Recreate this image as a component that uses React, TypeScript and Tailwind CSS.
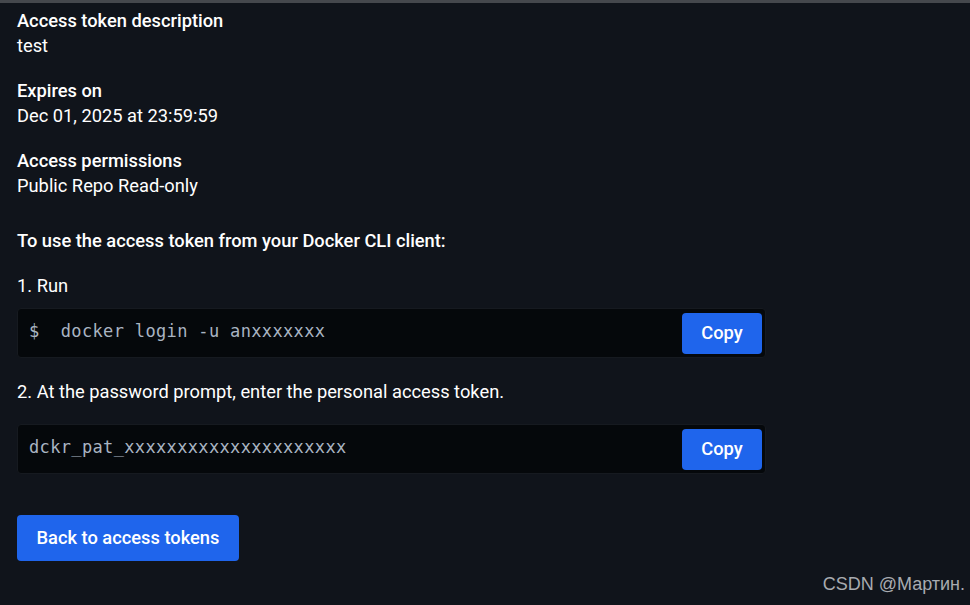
import React from "react";

function Field({ label, value, first }: { label: string; value: string; first?: boolean }) {
  return (
    <div className={first ? "" : "mt-[20px]"}>
      <div className="text-[18.3px] leading-[25px] font-medium text-white">{label}</div>
      <div className="text-[18.3px] leading-[25px] text-white">{value}</div>
    </div>
  );
}

function CodeBox({ text, className }: { text: string; className?: string }) {
  return (
    <div
      className={
        "w-[749px] h-[50px] rounded-[4px] bg-[#05080b] border border-[#161a20] flex items-center justify-between pl-[11px] pr-[3px] " +
        (className ?? "")
      }
    >
      <span
        className="text-[17px] tracking-[0.35px] text-[#a9b4c2] whitespace-pre -mt-[3px]"
        style={{ fontFamily: '"DejaVu Sans Mono", "Liberation Mono", monospace' }}
      >
        {text}
      </span>
      <button className="w-[80px] h-[41px] rounded-[4px] bg-[#1f65ec] text-white text-[18.3px] font-medium pb-[1px]">
        Copy
      </button>
    </div>
  );
}

export default function App() {
  return (
    <div
      className="w-[970px] h-[605px] bg-[#10141b] relative overflow-hidden"
      style={{ fontFamily: 'Roboto, "Noto Sans", sans-serif' }}
    >
      <div className="h-[3px] bg-[#45484d]" />
      <div className="px-[17px] pt-[5px]">
        <Field first label="Access token description" value="test" />
        <Field label="Expires on" value="Dec 01, 2025 at 23:59:59" />
        <Field label="Access permissions" value="Public Repo Read-only" />
        <div className="mt-[30px] text-[18.3px] leading-[25px] font-medium text-white">
          To use the access token from your Docker CLI client:
        </div>
        <div className="mt-[20px] text-[18.3px] leading-[25px] text-white">1. Run</div>
        <CodeBox className="mt-[10px]" text="$  docker login -u anxxxxxxx" />
        <div className="mt-[21px] text-[18.3px] leading-[25px] text-white">
          2. At the password prompt, enter the personal access token.
        </div>
        <CodeBox className="mt-[20px]" text="dckr_pat_xxxxxxxxxxxxxxxxxxxxx" />
        <button className="mt-[41px] w-[222px] h-[46px] rounded-[4px] bg-[#1f65ec] text-white text-[18.3px] font-medium pb-[1px]">
          Back to access tokens
        </button>
      </div>
      <div
        className="absolute right-[5px] bottom-[7px] text-[18px] text-[#a8abb0]"
        style={{ fontFamily: '"Liberation Sans", Arial, sans-serif' }}
      >
        CSDN @Мартин.
      </div>
    </div>
  );
}
